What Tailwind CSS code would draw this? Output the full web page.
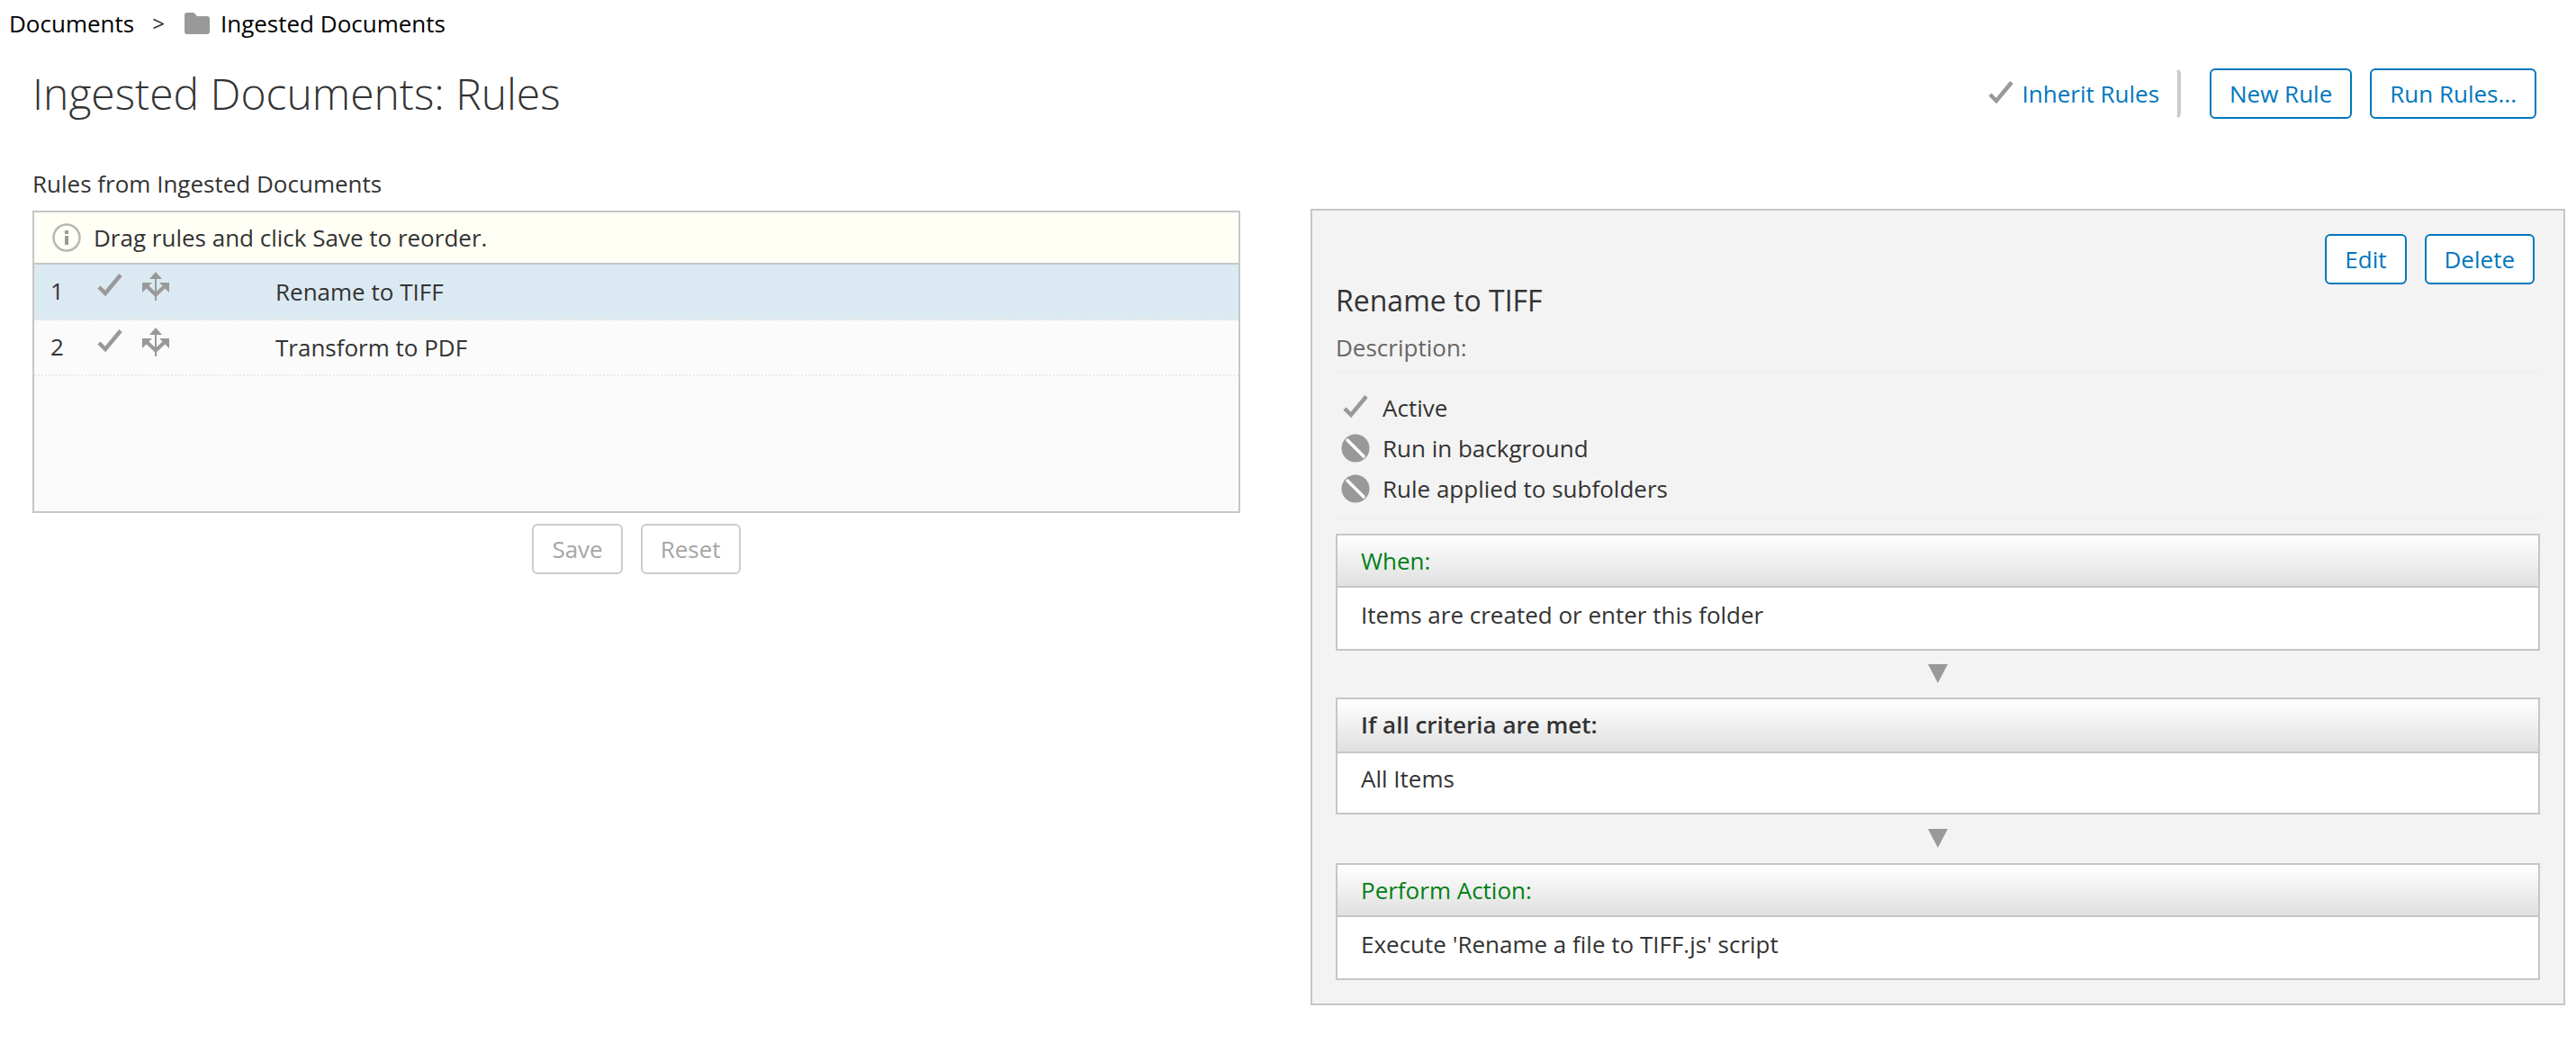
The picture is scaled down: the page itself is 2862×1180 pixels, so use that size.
<!DOCTYPE html>
<html lang="en">
<head>
<meta charset="utf-8">
<title>Ingested Documents: Rules</title>
<script src="https://cdn.jsdelivr.net/npm/@tailwindcss/browser@4"></script>
</head>
<body class="bg-white font-['Open_Sans',sans-serif] text-[26px] leading-9 text-[#333333]">
<svg class="hidden">
  <symbol id="check" viewBox="0 0 32 32"><path d="M4 17l7 7L28 3.500" fill="none" stroke="#999999" stroke-width="4.500"/></symbol>
  <symbol id="run" viewBox="0 0 32 32"><path d="M15 0l7 8H8zM0 12h11L0 23zM30 12H19l11 11z" fill="#999999"/><path d="M5 16l10 9.500L25 16" fill="none" stroke="#999999" stroke-width="4"/><path d="M15 6v26" stroke="#999999" stroke-width="2"/></symbol>
  <symbol id="off" viewBox="0 0 32 32"><circle cx="16" cy="16" r="15.500" fill="#999999"/><path d="M7 7l18 18" stroke="#fff" stroke-width="3.500" stroke-linecap="round"/></symbol>
  <symbol id="down" viewBox="0 0 22 22"><path d="M0 0h22L11 21z" fill="#999999"/></symbol>
</svg>

<nav aria-label="Breadcrumb" class="flex items-center px-[10px] pt-2 text-black">
  <a href="#">Documents</a>
  <span class="mx-5 text-[24px] text-[#333333]">&gt;</span>
  <a href="#" class="flex items-center gap-[10px]">
    <svg class="size-8" viewBox="0 0 32 32"><path d="M5 4h7q1 0 2 2l2 2h11q3 0 3 3v14q0 3-3 3H5q-3 0-3-3V7q0-3 3-3z" fill="#999999"/></svg>Ingested Documents</a>
</nav>

<header class="flex items-center justify-between pt-8 pr-11 pl-9">
  <h1 class="text-[48px] leading-[56px] font-light">Ingested Documents: Rules</h1>
  <div class="flex h-14 text-[#0077bd]">
    <button class="mr-8 flex items-center gap-2 rounded-md border-2 border-r-4 border-transparent border-r-[#cccccc] pr-5"><svg class="size-8"><use href="#check"/></svg>Inherit Rules</button>
    <button class="mr-5 rounded-md border-2 border-[#0077bd] px-5">New Rule</button>
    <button class="rounded-md border-2 border-[#0077bd] px-5">Run Rules...</button>
  </div>
</header>

<main class="grid grid-cols-[1342fr_1394fr] items-start gap-[78px] pt-[54px] pr-3 pl-9">
  <section>
    <h2>Rules from Ingested Documents</h2>
    <div class="mt-3 h-[336px] border-2 border-[#c6c6c6] bg-[#fbfbfb]">
      <p class="flex h-[58px] items-center gap-[14px] border-b-2 border-[#c6c6c6] bg-[#fffff5] pl-5">
        <svg class="size-8" viewBox="0 0 32 32"><circle cx="16" cy="16" r="14.500" fill="none" stroke="#b8b8b8" stroke-width="2.500"/><path d="M14 8h4v4h-4zM14 14h4v10h-4z" fill="#999999"/></svg>Drag rules and click Save to reorder.</p>
      <ol>
        <li class="flex h-[62px] items-start border-b-2 border-dotted border-[#ebebeb] bg-[#dbe9f2] pt-2 pl-[18px]">
          <span class="w-[50px] pt-[3px]">1</span>
          <svg class="size-8"><use href="#check"/></svg>
          <svg class="ml-5 size-8"><use href="#run"/></svg>
          <span class="ml-[116px] pt-1">Rename to TIFF</span>
        </li>
        <li class="flex h-[62px] items-start border-b-2 border-dotted border-[#ebebeb] pt-2 pl-[18px]">
          <span class="w-[50px] pt-[3px]">2</span>
          <svg class="size-8"><use href="#check"/></svg>
          <svg class="ml-5 size-8"><use href="#run"/></svg>
          <span class="ml-[116px] pt-1">Transform to PDF</span>
        </li>
      </ol>
    </div>
    <div class="mt-3 flex h-14 justify-center gap-5 text-[#a6a6a6]">
      <button class="rounded-md border-2 border-[#cccccc] px-5" disabled>Save</button>
      <button class="rounded-md border-2 border-[#cccccc] px-5" disabled>Reset</button>
    </div>
  </section>

  <section class="mt-[46px] border-2 border-[#c6c6c6] bg-[#f3f3f3] px-[26px] pt-[26px] pb-[26px]">
    <div class="flex h-14 justify-end gap-5 pr-[6px] text-[#0077bd]">
      <button class="rounded-md border-2 border-[#0077bd] bg-white px-5">Edit</button>
      <button class="rounded-md border-2 border-[#0077bd] bg-white px-5">Delete</button>
    </div>
    <h2 class="text-[32px]">Rename to TIFF</h2>
    <p class="mt-4 border-b-2 border-[#eeeeee] pb-2 text-[#666666]">Description:</p>
    <ul class="border-b-2 border-[#eeeeee] pt-4 pb-[10px]">
      <li class="flex h-[45px] items-center gap-[14px] pl-[6px]"><svg class="size-8"><use href="#check"/></svg>Active</li>
      <li class="flex h-[45px] items-center gap-[14px] pl-[6px]"><svg class="size-8"><use href="#off"/></svg>Run in background</li>
      <li class="flex h-[45px] items-center gap-[14px] pl-[6px]"><svg class="size-8"><use href="#off"/></svg>Rule applied to subfolders</li>
    </ul>
    <div class="mt-4 h-[130px] border-2 border-[#c6c6c6] bg-white">
      <h3 class="border-b-2 border-[#c6c6c6] bg-linear-to-b from-white to-[#e0e0e0] px-[26px] py-[10px] text-[#008016]">When:</h3>
      <p class="px-[26px] pt-3">Items are created or enter this folder</p>
    </div>
    <svg class="mx-auto my-[15px] size-[22px]"><use href="#down"/></svg>
    <div class="h-[130px] border-2 border-[#c6c6c6] bg-white">
      <h3 class="border-b-2 border-[#c6c6c6] bg-linear-to-b from-white to-[#e0e0e0] px-[26px] pt-[10px] pb-3 font-semibold">If all criteria are met:</h3>
      <p class="px-[26px] pt-[10px]">All Items</p>
    </div>
    <svg class="mx-auto my-4 size-[22px]"><use href="#down"/></svg>
    <div class="h-[130px] border-2 border-[#c6c6c6] bg-white">
      <h3 class="border-b-2 border-[#c6c6c6] bg-linear-to-b from-white to-[#e0e0e0] px-[26px] py-[10px] text-[#008016]">Perform Action:</h3>
      <p class="px-[26px] pt-3">Execute 'Rename a file to TIFF.js' script</p>
    </div>
  </section>
</main>
</body>
</html>
